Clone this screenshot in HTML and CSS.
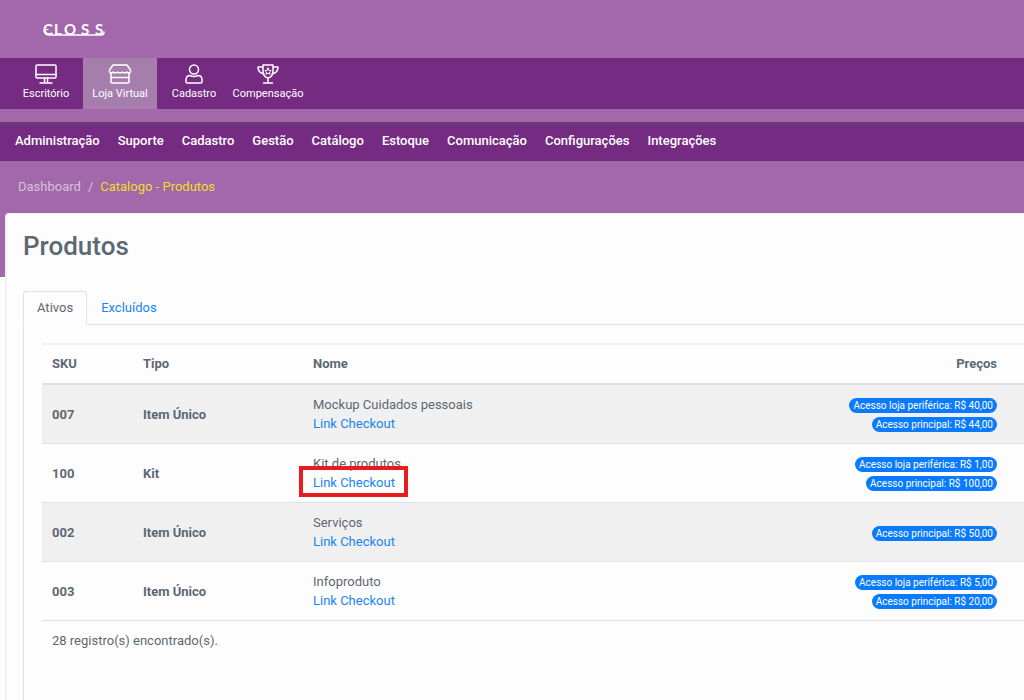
FILE: index.html
```html
<!DOCTYPE html>
<html lang="pt-BR">
<head>
  <meta charset="UTF-8">
  <meta name="viewport" content="width=device-width, initial-scale=1.0">
  <title>Produtos</title>
  <link rel="stylesheet" href="styles.css">
</head>
<body>

  <!-- Header -->
  <header class="header">
    <a class="logo" href="#" aria-label="Closs">
      <svg width="72" height="24" viewBox="0 0 72 24" fill="none" stroke="#fff" stroke-width="2" stroke-linecap="round">
        <text class="logo-text" x="1 12 22 39 53" y="18">CLOSS</text>
        <path d="M2 14C3 17 4 18 7 18H59Q62 18 62 15" stroke-width="1.500"/>
        <path d="M4 12.500H6" stroke-width="1"/>
      </svg>
    </a>
  </header>

  <!-- Modules -->
  <nav class="modules">
    <a class="module" href="#">
      <svg class="icon" viewBox="0 0 24 20">
        <rect x="2" y="1" width="20" height="13" rx="1"/>
        <path d="M2 10.500H22M10.500 14V18M13.500 14V18M6 19H18"/>
      </svg>
      Escritório
    </a>
    <a class="module active" href="#">
      <svg class="icon" viewBox="0 0 24 20">
        <path d="M5 1H19L22.500 6V8Q21 10 19 8Q17 10 14.500 8Q12 10 9.500 8Q7 10 5 8Q3 10 1.500 8V6Z"/>
        <path d="M3 9.500V18Q3 19 4 19H20Q21 19 21 18V9.500M3 13.500H21"/>
      </svg>
      Loja Virtual
    </a>
    <a class="module" href="#">
      <svg class="icon" viewBox="0 0 24 20">
        <circle cx="12" cy="5.500" r="4.500"/>
        <path d="M4 18V16Q4 11.500 8 11.500Q12 13.500 16 11.500Q20 11.500 20 16V18Q20 19 19 19H5Q4 19 4 18Z"/>
      </svg>
      Cadastro
    </a>
    <a class="module" href="#">
      <svg class="icon" viewBox="0 0 24 20">
        <path d="M7 1H17V7Q17 13 12 14Q7 13 7 7ZM7 3H2Q2 9 8 10M17 3H22Q22 9 16 10M12 14V19M7.500 19H16.500"/>
        <path class="star" d="M12 4L13 6.300L15.200 6.500L13.500 8L14 10.300L12 9.100L10 10.300L10.500 8L8.800 6.500L11 6.300Z"/>
      </svg>
      Compensação
    </a>
  </nav>

  <!-- Main menu -->
  <nav class="menu">
    <a href="#">Administração</a>
    <a href="#">Suporte</a>
    <a href="#">Cadastro</a>
    <a href="#">Gestão</a>
    <a href="#">Catálogo</a>
    <a href="#">Estoque</a>
    <a href="#">Comunicação</a>
    <a href="#">Configurações</a>
    <a href="#">Integrações</a>
  </nav>

  <!-- Breadcrumb -->
  <nav class="breadcrumb">
    <a href="#">Dashboard</a>
    <span>/</span>
    <span class="current">Catalogo - Produtos</span>
  </nav>

  <!-- Content -->
  <main class="card">
    <h1>Produtos</h1>

    <div class="tabs">
      <a class="tab active" href="#">Ativos</a>
      <a class="tab" href="#">Excluídos</a>
    </div>

    <div class="tab-content">
      <table class="products">
        <thead>
          <tr>
            <th class="col-sku">SKU</th>
            <th class="col-type">Tipo</th>
            <th>Nome</th>
            <th class="prices">Preços</th>
          </tr>
        </thead>
        <tbody>
          <tr>
            <th>007</th>
            <th>Item Único</th>
            <td>Mockup Cuidados pessoais<br><a href="#">Link Checkout</a></td>
            <td class="prices">
              <div><span class="badge">Acesso loja periférica: R$ 40,00</span></div>
              <div><span class="badge">Acesso principal: R$ 44,00</span></div>
            </td>
          </tr>
          <tr>
            <th>100</th>
            <th>Kit</th>
            <td>Kit de produtos<br><a class="highlight" href="#">Link Checkout</a></td>
            <td class="prices">
              <div><span class="badge">Acesso loja periférica: R$ 1,00</span></div>
              <div><span class="badge">Acesso principal: R$ 100,00</span></div>
            </td>
          </tr>
          <tr>
            <th>002</th>
            <th>Item Único</th>
            <td>Serviços<br><a href="#">Link Checkout</a></td>
            <td class="prices">
              <div><span class="badge">Acesso principal: R$ 50,00</span></div>
            </td>
          </tr>
          <tr>
            <th>003</th>
            <th>Item Único</th>
            <td>Infoproduto<br><a href="#">Link Checkout</a></td>
            <td class="prices">
              <div><span class="badge">Acesso loja periférica: R$ 5,00</span></div>
              <div><span class="badge">Acesso principal: R$ 20,00</span></div>
            </td>
          </tr>
        </tbody>
      </table>
      <p class="total">28 registro(s) encontrado(s).</p>
    </div>
  </main>

</body>
</html>
```
FILE: styles.css
```css
* {
  margin: 0;
  padding: 0;
  box-sizing: border-box;
}

body {
  display: flex;
  flex-direction: column;
  min-height: 100vh;
  font-family: Roboto, sans-serif;
  font-size: 13px;
  line-height: 19px;
  color: #5c6873;
  background: #fdfdfd linear-gradient(#a268ab, #a268ab) no-repeat;
  background-size: 100% 277px;
}

a {
  color: #1b84f5;
  text-decoration: none;
}

/* Header */
.header {
  display: flex;
  align-items: center;
  height: 58px;
  padding: 0 42px;
}

.logo svg {
  display: block;
}

.logo-text {
  font-family: Lato, sans-serif;
  font-size: 15px;
  font-weight: 700;
  fill: #fff;
  stroke: none;
}

/* Modules */
.modules {
  display: flex;
  height: 51px;
  padding-left: 9px;
  background: #752b82;
}

.module {
  display: flex;
  flex-direction: column;
  align-items: center;
  min-width: 74px;
  padding-top: 6px;
  font-size: 11px;
  line-height: 20px;
  color: #fff;
}

.module.active {
  background: #a67eae;
}

.icon {
  width: 24px;
  height: 20px;
  fill: none;
  stroke: #fff;
  stroke-width: 1.5;
  stroke-linejoin: round;
  stroke-linecap: round;
}

.star {
  stroke-width: 1;
}

/* Main menu */
.menu {
  display: flex;
  gap: 18px;
  margin-top: 13px;
  padding: 5px 15px 11px;
  border-top: 4px solid #6a377a;
  background: #752b82;
}

.menu a {
  font-weight: 500;
  color: #fff;
}

/* Breadcrumb */
.breadcrumb {
  display: flex;
  gap: 7px;
  padding: 16px 18px 17px;
  color: #d5c3d9;
}

.breadcrumb a {
  color: #d5c3d9;
}

.breadcrumb .current {
  color: #f5dc28;
}

/* Content */
.card {
  flex: 1;
  display: flex;
  flex-direction: column;
  margin-left: 5px;
  padding: 16px 0 0 16px;
  border: 2px solid #f0f0f0;
  border-width: 1px 0 0 2px;
  border-radius: 4px 0 0 0;
  background: #fdfdfd;
}

h1 {
  font-size: 26px;
  font-weight: 500;
  line-height: 32px;
  margin-bottom: 29px;
}

.tabs {
  display: flex;
  border-bottom: 1px solid #dee2e6;
}

.tab {
  padding: 6px 13px 7px;
  margin-bottom: -1px;
  border: 1px solid transparent;
}

.tab.active {
  color: #5c6873;
  border-color: #dee2e6;
  border-bottom-color: #fdfdfd;
  border-radius: 4px 4px 0 0;
  background: #fdfdfd;
}

.tab-content {
  flex: 1;
  padding: 18px 0 0 18px;
  border-left: 1px solid #dee2e6;
}

/* Products table */
.products {
  width: 100%;
  border-collapse: separate;
  border-spacing: 0;
}

.products th,
.products td {
  padding: 10px;
  border-bottom: 1px solid #dee2e6;
  text-align: left;
  vertical-align: middle;
}

.products thead th {
  padding: 9px 10px 10px;
  border-top: 2px solid #f0f0f0;
  border-bottom: 2px solid #dee2e6;
}

.products tbody tr:nth-child(odd) {
  background: #f0f0f0;
}

.col-sku {
  width: 91px;
}

.col-type {
  width: 170px;
}

.products .prices {
  padding-right: 27px;
  text-align: right;
}

.badge {
  display: inline-block;
  padding: 0 4px;
  border-radius: 8px;
  background: #0a7bff;
  color: #fff;
  font-size: 10px;
  line-height: 15px;
}

/* Red frame drawn over the row */
.highlight {
  position: relative;
}

.highlight::after {
  content: "";
  position: absolute;
  inset: -9px -13px -7px -14px;
  border: 4px solid #e81b1f;
}

.total {
  padding: 10px;
}
```
